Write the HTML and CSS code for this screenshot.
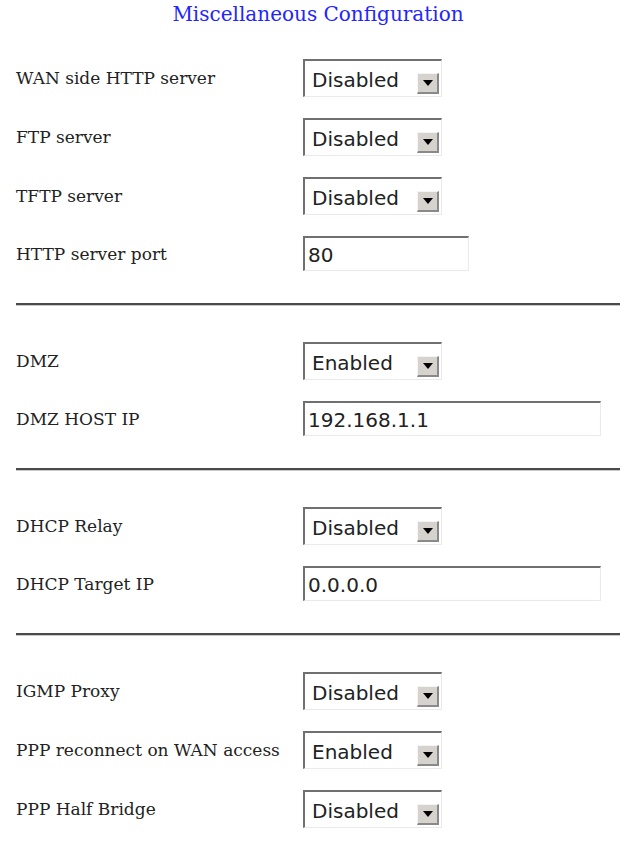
FILE: index.html
```html
<!DOCTYPE html>
<html>
<head>
<meta charset="utf-8">
<title>Miscellaneous Configuration</title>
<link rel="stylesheet" href="styles.css">
</head>
<body>
<div class="page">
  <h1 class="title">Miscellaneous Configuration</h1>

  <div class="section">
    <div class="row"><span class="label">WAN side HTTP server</span><div class="select"><span class="value">Disabled</span><span class="btn"><span class="tri"></span></span></div></div>
    <div class="row"><span class="label">FTP server</span><div class="select"><span class="value">Disabled</span><span class="btn"><span class="tri"></span></span></div></div>
    <div class="row"><span class="label">TFTP server</span><div class="select"><span class="value">Disabled</span><span class="btn"><span class="tri"></span></span></div></div>
    <div class="row row-input"><span class="label">HTTP server port</span><div class="input short">80</div></div>
  </div>
  <div class="divider"></div>

  <div class="section">
    <div class="row"><span class="label">DMZ</span><div class="select"><span class="value">Enabled</span><span class="btn"><span class="tri"></span></span></div></div>
    <div class="row row-input"><span class="label">DMZ HOST IP</span><div class="input long">192.168.1.1</div></div>
  </div>
  <div class="divider"></div>

  <div class="section">
    <div class="row"><span class="label">DHCP Relay</span><div class="select"><span class="value">Disabled</span><span class="btn"><span class="tri"></span></span></div></div>
    <div class="row row-input"><span class="label">DHCP Target IP</span><div class="input long">0.0.0.0</div></div>
  </div>
  <div class="divider"></div>

  <div class="section">
    <div class="row"><span class="label">IGMP Proxy</span><div class="select"><span class="value">Disabled</span><span class="btn"><span class="tri"></span></span></div></div>
    <div class="row"><span class="label">PPP reconnect on WAN access</span><div class="select"><span class="value">Enabled</span><span class="btn"><span class="tri"></span></span></div></div>
    <div class="row"><span class="label">PPP Half Bridge</span><div class="select"><span class="value">Disabled</span><span class="btn"><span class="tri"></span></span></div></div>
  </div>
</div>
</body>
</html>
```

FILE: styles.css
```css
html, body {
  margin: 0;
  padding: 0;
  background: #ffffff;
}

.page {
  padding: 0 17px 0 16px;
  font-family: "DejaVu Serif", serif;
  color: #222222;
}

.title {
  margin: 0;
  height: 48px;
  line-height: 28px;
  font-size: 20px;
  font-weight: normal;
  color: #2424ff;
  text-align: center;
}

.section {
  display: flex;
  flex-direction: column;
}

.row {
  display: flex;
  align-items: center;
  height: 59px;
}

.row-input {
  height: 57px;
}

.label {
  width: 287px;
  flex: none;
  font-size: 17px;
  white-space: nowrap;
}

.select {
  box-sizing: border-box;
  width: 139px;
  height: 38px;
  display: flex;
  align-items: flex-end;
  background: #ffffff;
  border-top: 2px solid #707070;
  border-left: 2px solid #707070;
  border-right: 1px solid #ece8ec;
  border-bottom: 1px solid #ece8ec;
  font-family: "DejaVu Sans", sans-serif;
  font-size: 20px;
  color: #222222;
}

.value {
  padding-left: 7px;
  line-height: 24px;
  margin-bottom: 4px;
  flex: 1;
}

.btn {
  box-sizing: border-box;
  width: 22px;
  height: 21px;
  margin: 0 2px 2px 0;
  background: #d6d3ce;
  border-top: 1px solid #f4f4f4;
  border-left: 1px solid #f4f4f4;
  border-right: 2px solid #8a8a8a;
  border-bottom: 2px solid #8a8a8a;
  display: flex;
  align-items: center;
  justify-content: center;
}

.tri {
  width: 0;
  height: 0;
  border-left: 5px solid transparent;
  border-right: 5px solid transparent;
  border-top: 6px solid #000000;
  margin-top: 1px;
}

.input {
  box-sizing: border-box;
  height: 35px;
  padding-left: 3px;
  padding-top: 4px;
  background: #ffffff;
  border-top: 2px solid #707070;
  border-left: 2px solid #707070;
  border-right: 1px solid #ece8ec;
  border-bottom: 1px solid #ece8ec;
  font-family: "DejaVu Sans", sans-serif;
  font-size: 20px;
  line-height: 26px;
  color: #222222;
}

.input.short {
  width: 166px;
}

.input.long {
  width: 298px;
}

.divider {
  margin: 21px 0 25px;
  height: 0;
  border-top: 2px solid #4a4a4a;
  border-bottom: 1px solid #c8c8c8;
}
```
